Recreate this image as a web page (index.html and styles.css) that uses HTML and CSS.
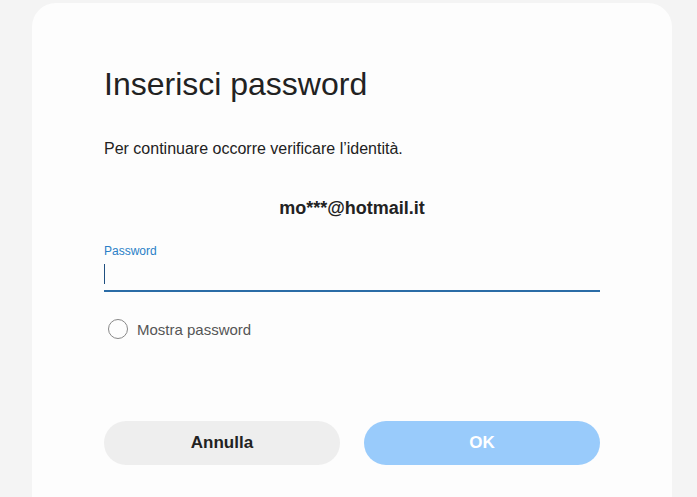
FILE: index.html
```html
<!DOCTYPE html>
<html lang="it">
<head>
    <meta charset="UTF-8">
    <title>Inserisci password</title>
    <link rel="stylesheet" href="styles.css">
</head>
<body>
<div class="card">
    <h1>Inserisci password</h1>
    <p class="info">Per continuare occorre verificare l’identità.</p>
    <p class="account">mo***@hotmail.it</p>
    <div class="field">
        <label class="label">Password</label>
        <div class="input"><span class="caret"></span></div>
    </div>
    <div class="show">
        <span class="radio"></span>
        <span>Mostra password</span>
    </div>
    <div class="buttons">
        <button class="btn cancel">Annulla</button>
        <button class="btn ok">OK</button>
    </div>
</div>
</body>
</html>
```

FILE: styles.css
```css
html,body{
    margin:0;
    padding:0;
}
body{
    background:#f4f4f4;
    font-family:"Liberation Sans",Arial,sans-serif;
    height:497px;
    overflow:hidden;
}
.card{
    margin:3px 0 0 32px;
    width:496px;
    height:494px;
    padding:0 72px;
    background:#fdfdfd;
    border-radius:24px 24px 0 0;
    overflow:hidden;
}
h1{
    margin:0;
    padding-top:62px;
    font-size:32px;
    line-height:38px;
    font-weight:normal;
    color:#222;
}
.info{
    margin:36px 0 0;
    font-size:16px;
    line-height:20px;
    color:#222;
}
.account{
    margin:38px 0 0;
    font-size:18px;
    line-height:22px;
    font-weight:bold;
    text-align:center;
    color:#222;
}
.field{
    margin-top:25px;
}
.label{
    display:block;
    font-size:12px;
    line-height:14px;
    color:#2a7fc7;
}
.input{
    height:32px;
    border-bottom:2px solid #2a6ca6;
    display:flex;
    align-items:center;
}
.caret{
    width:1px;
    height:20px;
    background:#1f4f80;
}
.show{
    display:flex;
    align-items:center;
    margin-top:27px;
    margin-left:4px;
    font-size:15px;
    color:#555;
}
.radio{
    width:18px;
    height:18px;
    border:1px solid #888;
    border-radius:50%;
    margin-right:9px;
}
.buttons{
    display:flex;
    gap:24px;
    margin-top:82px;
}
.btn{
    flex:1;
    height:44px;
    border:none;
    border-radius:22px;
    font-family:"Liberation Sans",Arial,sans-serif;
    font-size:17px;
    font-weight:bold;
}
.cancel{
    background:#eeeeee;
    color:#222;
}
.ok{
    background:#99cbfb;
    color:#fff;
}
```
